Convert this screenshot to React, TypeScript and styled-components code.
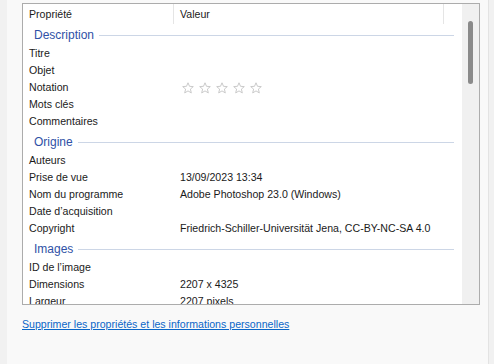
import React from "react";
import styled, {createGlobalStyle} from "styled-components";

interface Row {
    name: string;
    value?: string;
    stars?: boolean;
}

interface Group {
    title: string;
    rows: Row[];
}

const groups: Group[] = [
    {
        title: "Description",
        rows: [
            {name: "Titre"},
            {name: "Objet"},
            {name: "Notation", stars: true},
            {name: "Mots clés"},
            {name: "Commentaires"},
        ],
    },
    {
        title: "Origine",
        rows: [
            {name: "Auteurs"},
            {name: "Prise de vue", value: "13/09/2023 13:34"},
            {name: "Nom du programme", value: "Adobe Photoshop 23.0 (Windows)"},
            {name: "Date d’acquisition"},
            {name: "Copyright", value: "Friedrich-Schiller-Universität Jena, CC-BY-NC-SA 4.0"},
        ],
    },
    {
        title: "Images",
        rows: [
            {name: "ID de l’image"},
            {name: "Dimensions", value: "2207 x 4325"},
            {name: "Largeur", value: "2207 pixels"},
        ],
    },
];

function Star() {
    return (
        <svg width="12" height="12" viewBox="0 0 12 12">
            <path
                d="M6 0.8 L7.5 4.3 L11.3 4.6 L8.4 7.1 L9.3 10.9 L6 8.9 L2.7 10.9 L3.6 7.1 L0.7 4.6 L4.5 4.3 Z"
                fill="none"
                stroke="#c4c4c4"
                strokeWidth="0.9"
                strokeLinejoin="round"
            />
        </svg>
    );
}

function App() {
    return (
        <>
            <GlobalStyle/>
            <Page>
                <Panel>
                    <ListBox>
                        <Content>
                            <HeaderRow>
                                <HeaderCell $width={151}>{"Propriété"}</HeaderCell>
                                <HeaderCell $width={270}>{"Valeur"}</HeaderCell>
                            </HeaderRow>
                            {groups.map((g, i) =>
                                <div key={g.title}>
                                    <GroupHeader $first={i === 0}>
                                        <GroupTitle>{g.title}</GroupTitle>
                                        <GroupLine/>
                                    </GroupHeader>
                                    {g.rows.map(r =>
                                        <PropRow key={r.name}>
                                            <NameCell>{r.name}</NameCell>
                                            <ValueCell>
                                                {r.stars
                                                    ? <Stars>{[0, 1, 2, 3, 4].map(s => <Star key={s}/>)}</Stars>
                                                    : r.value}
                                            </ValueCell>
                                        </PropRow>)}
                                </div>)}
                        </Content>
                        <ScrollTrack>
                            <ScrollThumb/>
                        </ScrollTrack>
                    </ListBox>
                    <RemoveLink href="#">{"Supprimer les propriétés et les informations personnelles"}</RemoveLink>
                </Panel>
            </Page>
        </>
    );
}

/**
 * Styled Components
 */
const GlobalStyle = createGlobalStyle`
    html, body {
        margin: 0;
        padding: 0;
        background: #f1f1f1;
    }
    body {
        font-family: "Liberation Sans", Arial, sans-serif;
        font-size: 10.6px;
        color: #1a1a1a;
    }
`;

const Page = styled("div")`
    width: 494px;
    height: 364px;
    padding-left: 7px;
    box-sizing: border-box;
    overflow: hidden;
`;

const Panel = styled("div")`
    width: 482px;
    height: 364px;
    box-sizing: border-box;
    background: #f9f9f9;
    border-right: 1px solid #e3e3e3;
    padding: 3px 0 0 15px;
    display: flex;
    flex-direction: column;
`;

const ListBox = styled("div")`
    width: 458px;
    height: 302px;
    flex-shrink: 0;
    box-sizing: border-box;
    border: 1px solid #acacac;
    background: #ffffff;
    display: flex;
    flex-direction: row;
`;

const Content = styled("div")`
    flex: 1;
    overflow: hidden;
    display: flex;
    flex-direction: column;
`;

const HeaderRow = styled("div")`
    display: flex;
    flex-direction: row;
    height: 20px;
    flex-shrink: 0;
`;

const HeaderCell = styled("div")<{ $width: number }>`
    width: ${p => p.$width}px;
    box-sizing: border-box;
    padding-left: 6px;
    line-height: 20px;
    border-right: 1px solid #e5e5e5;
`;

const GroupHeader = styled("div")<{ $first: boolean }>`
    display: flex;
    flex-direction: row;
    align-items: center;
    height: 10px;
    padding: ${p => p.$first ? "6px 8px 5px 11px" : "7px 8px 5px 11px"};
`;

const GroupTitle = styled("span")`
    font-size: 12px;
    color: #2f51a6;
    line-height: 14px;
`;

const GroupLine = styled("div")`
    flex: 1;
    height: 1px;
    margin-left: 5px;
    background: #ccd6e6;
`;

const PropRow = styled("div")`
    display: flex;
    flex-direction: row;
    height: 17px;
    line-height: 17px;
`;

const NameCell = styled("div")`
    width: 157px;
    padding-left: 6px;
    box-sizing: border-box;
    white-space: nowrap;
`;

const ValueCell = styled("div")`
    flex: 1;
    white-space: nowrap;
    display: flex;
    align-items: center;
`;

const Stars = styled("div")`
    display: flex;
    gap: 5px;
    padding-left: 2px;
`;

const ScrollTrack = styled("div")`
    width: 17px;
    background: #f0f0f0;
    display: flex;
    flex-direction: column;
    align-items: center;
`;

const ScrollThumb = styled("div")`
    width: 5px;
    height: 63px;
    margin-top: 17px;
    border-radius: 3px;
    background: #8a8a8a;
`;

const RemoveLink = styled("a")`
    margin-top: 12px;
    align-self: flex-start;
    color: #0a66c8;
    text-decoration: underline;
    line-height: 14px;
`;

export default App;
